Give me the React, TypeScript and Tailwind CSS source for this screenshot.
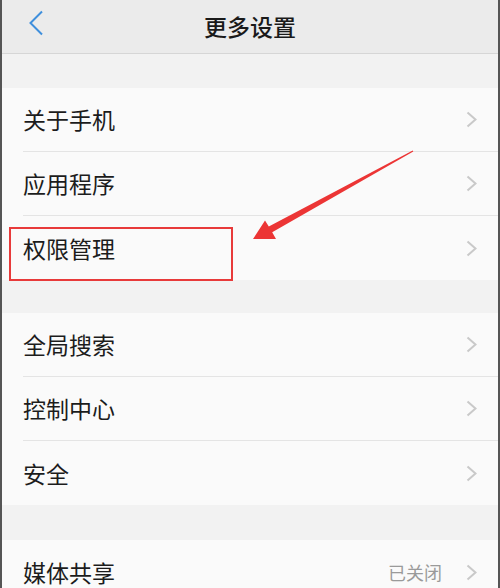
import React from "react";

const font = { fontFamily: '"Noto Sans CJK SC", "Noto Sans", sans-serif' };

function Chevron() {
  return (
    <svg width="11" height="17" viewBox="0 0 11 17" className="shrink-0">
      <polyline points="1.5,1.5 9.5,8.5 1.5,15.5" fill="none" stroke="#c9c9c9" strokeWidth="2" />
    </svg>
  );
}

function Row({ label, value, last }: { label: string; value?: string; last?: boolean }) {
  return (
    <div className="flex h-16 bg-[#fafafa] pl-[21px]">
      <div className={"flex flex-1 items-center pr-[21px] " + (last ? "" : "border-b border-[#e4e4e4]")}>
        <span className="flex-1 text-[23px] text-[#1c1c1c]">{label}</span>
        {value && <span className="mr-6 text-[18px] text-[#9a9a9a]">{value}</span>}
        <Chevron />
      </div>
    </div>
  );
}

function Gap({ h }: { h: string }) {
  return <div className={"bg-[#f2f2f2] " + h} />;
}

export default function App() {
  return (
    <div style={font} className="relative h-[588px] w-[500px] overflow-hidden border-x-2 border-[#555] bg-[#f2f2f2]">
      <div className="relative flex h-[54px] items-center justify-center border-b border-[#d6d6d6] bg-[#ebebeb]">
        <svg width="16" height="26" viewBox="0 0 16 26" className="absolute left-[26px] top-[10px]">
          <polyline points="14,1.5 2.5,13 14,24.5" fill="none" stroke="#3f8fdc" strokeWidth="2" />
        </svg>
        <span className="text-[23px] font-medium text-[#1a1a1a]">更多设置</span>
      </div>
      <Gap h="h-[34px]" />
      <Row label="关于手机" />
      <Row label="应用程序" />
      <Row label="权限管理" last />
      <Gap h="h-[33px]" />
      <Row label="全局搜索" />
      <Row label="控制中心" />
      <Row label="安全" last />
      <Gap h="h-[35px]" />
      <Row label="媒体共享" value="已关闭" last />

      <div className="absolute left-[7px] top-[227px] h-[54px] w-[224px] border-2 border-[#e83a3a]" />
      <svg className="pointer-events-none absolute left-[-2px] top-0" width="500" height="588">
        <polygon
          points="413.3,151.5 272.2,232.3 276,239 253,239 265,220.5 268.8,226.4 412.7,150.5"
          fill="#ec3535"
        />
      </svg>
    </div>
  );
}
